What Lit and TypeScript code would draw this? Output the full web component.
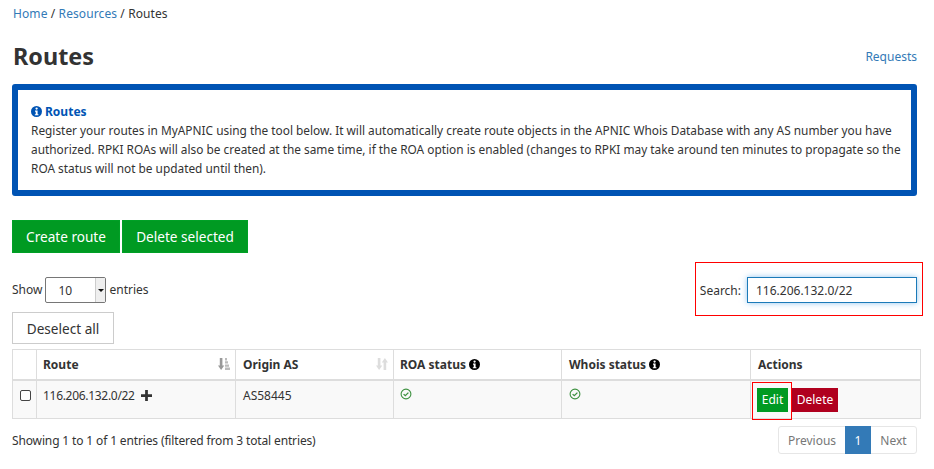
import { LitElement, html, css, svg } from "lit";
import { customElement } from "lit/decorators.js";

const info = (cls: string) => html`<svg class=${cls} viewBox="0 0 24 24" aria-hidden="true"><circle cx="12" cy="12" r="12" fill="currentColor"/><circle cx="12.2" cy="5.6" r="2.5" fill="#fff"/><path d="M8.8 10h5.6v8h1.8v2.4H8.4V18h1.9v-5.6H8.8z" fill="#fff"/></svg>`;
const check = html`<svg class="ok" viewBox="0 0 12 12" aria-hidden="true"><circle cx="6" cy="6" r="4.9" fill="none" stroke="#3d9140" stroke-width="1.1"/><path d="M3.6 6.1l1.7 1.6 3.1-3.1" fill="none" stroke="#3d9140" stroke-width="1.3"/></svg>`;
const sort = (active: boolean) => html`<svg class="sort" viewBox="0 0 12 12" aria-hidden="true">${active
  ? svg`<path d="M1.8 0h2.6v7.6h1.9L3.1 12 0 7.6h1.8z" fill="#999"/><path d="M7 0h2v2.4H7zM7 3.2h3v2.4H7zM7 6.4h4v2.4H7zM7 9.6h5V12H7z" fill="#bbb"/>`
  : svg`<path d="M1.8 0h2.6v7.6h1.9L3.1 12 0 7.6h1.8zM7.6 12h2.6V4.4H12L8.9 0 5.8 4.4h1.8z" fill="#ddd"/>`}</svg>`;

@customElement("app-root")
export class AppRoot extends LitElement {
  static styles = css`
    :host { display: block; position: relative; width: 934px; height: 469px; overflow: hidden; background: #fff; color: #333;
      font-family: "Noto Sans", "Open Sans", sans-serif; font-size: 12px; line-height: 19px; }
    a { color: #337ab7; text-decoration: none; }
    .page { display: flex; flex-direction: column; padding: 4px 13px 0 12px; }
    .crumbs { height: 20px; line-height: 20px; letter-spacing: .1px; padding-left: 1px; }
    .head { display: flex; justify-content: space-between; align-items: center; width: 905px; height: 40px; margin-top: 12px; }
    h1 { margin: 0; font-size: 23.4px; font-weight: 700; line-height: 40px; color: #333; padding-left: 1px; }
    .alert { margin-top: 8px; width: 905px; height: 112px; box-sizing: border-box; border: 6px solid #0054b4; border-radius: 3px; padding: 12px 8px 12px 13px; color: #333; font-size: 11.86px; }
    .alert-title { display: flex; align-items: center; gap: 3px; color: #0054b4; font-weight: 700; font-size: 12px; }
    .alert p { margin: 0; }
    .i-blue { width: 11px; height: 11px; }
    .actions { display: flex; gap: 2px; margin-top: 24px; }
    .btn { display: flex; align-items: center; justify-content: center; height: 33px; box-sizing: border-box; background: #009a22; color: #fff; font-size: 13.6px; border: 1px solid #00a026; }
    .create { width: 108px; }
    .del-sel { width: 126px; }
    .controls { display: flex; justify-content: space-between; align-items: center; margin-top: 24px; height: 26px; width: 905px; }
    .show { display: flex; align-items: center; gap: 3px; }
    .show-label { margin-top: -2px; }
    .select { display: flex; width: 61px; height: 26px; box-sizing: border-box; border: 1px solid #767676; border-radius: 2px; }
    .select .val { flex: 1; padding: 3px 0 0 12px; }
    .select .arrow { width: 9px; background: #efefef; border-left: 1px solid #ccc; display: flex; align-items: center; justify-content: center; }
    .select .arrow i { width: 0; height: 0; border: 3px solid transparent; border-top: 3px solid #111; border-bottom: 0; }
    .search { display: flex; align-items: center; gap: 6px; }
    .input { width: 170px; height: 26px; box-sizing: border-box; border: 1px solid #1b7ab8; box-shadow: 0 0 6px rgba(102,175,233,.7); padding: 3px 0 0 8px; color: #333; }
    .deselect { display: flex; align-items: center; justify-content: center; margin-top: 9px; width: 102px; height: 32px; box-sizing: border-box; border: 1px solid #ccc; font-size: 13.6px; }
    table { margin-top: 5px; width: 908px; border-collapse: collapse; table-layout: fixed; }
    th, td { border: 1px solid #ddd; padding: 0 0 0 7px; text-align: left; vertical-align: top; }
    th { height: 30px; vertical-align: middle; border-bottom: 2px solid #ddd; font-weight: 700; color: #333; box-sizing: border-box; }
    td { height: 39px; padding-top: 5px; box-sizing: border-box; background: #f9f9f9; }
    .tight { padding-left: 6px; }
    .thwrap { display: flex; align-items: center; gap: 3px; }
    .thwrap .sort { margin-left: auto; margin-right: 5px; }
    .sort { width: 12px; height: 12px; }
    .i-dark { width: 11px; height: 11px; color: #000; }
    .ok { width: 12px; height: 12px; display: block; margin-top: 2px; }
    .cb { width: 9px; height: 9px; border: 1px solid #444; border-radius: 2px; margin: 4px 0 0; background: #fff; }
    .route { letter-spacing: -.3px; }
    .plus { width: 11px; height: 11px; margin-left: 3px; vertical-align: -1px; }
    .row-btns { display: flex; gap: 4px; margin: 2px 0 0 -1px; }
    .small { display: flex; align-items: center; justify-content: center; height: 24px; color: #fff; }
    .edit { width: 31px; background: #009a22; }
    .delete { width: 46px; background: #b0001e; }
    .foot { display: flex; justify-content: space-between; align-items: center; width: 905px; margin-top: 7px; height: 28px; }
    .count { letter-spacing: -.14px; }
    .pager { display: flex; height: 28px; box-sizing: border-box; border: 1px solid #e6e6e6; border-radius: 3px; color: #777; }
    .pager span { display: flex; align-items: center; justify-content: center; }
    .prev { width: 66px; }
    .cur { width: 26px; background: #337ab7; color: #fff; margin: -1px 0; }
    .next { width: 45px; }
    .mark { position: absolute; border: 1px solid #f00; box-sizing: border-box; pointer-events: none; }
    .mark-search { left: 695px; top: 262px; width: 228px; height: 54px; }
    .mark-edit { left: 752px; top: 382px; width: 40px; height: 38px; }
  `;

  render() {
    return html`
      <div class="page">
        <div class="crumbs"><a href="#">Home</a> / <a href="#">Resources</a> / Routes</div>
        <div class="head"><h1>Routes</h1><a href="#">Requests</a></div>
        <div class="alert">
          <div class="alert-title">${info("i-blue")}<span>Routes</span></div>
          <p>Register your routes in MyAPNIC using the tool below. It will automatically create route objects in the APNIC Whois Database with any AS number you have authorized. RPKI ROAs will also be created at the same time, if the ROA option is enabled (changes to RPKI may take around ten minutes to propagate so the ROA status will not be updated until then).</p>
        </div>
        <div class="actions"><div class="btn create">Create route</div><div class="btn del-sel">Delete selected</div></div>
        <div class="controls">
          <div class="show"><span class="show-label">Show</span> <div class="select"><div class="val">10</div><div class="arrow"><i></i></div></div> <span class="show-label">entries</span></div>
          <div class="search"><span>Search:</span> <div class="input">116.206.132.0/22</div></div>
        </div>
        <div class="deselect">Deselect all</div>
        <table>
          <colgroup><col style="width:24px"><col style="width:199px"><col style="width:158px"><col style="width:168px"><col style="width:189px"><col style="width:170px"></colgroup>
          <thead><tr>
            <th></th>
            <th class="tight"><div class="thwrap">Route ${sort(true)}</div></th>
            <th><div class="thwrap">Origin AS ${sort(false)}</div></th>
            <th class="tight"><div class="thwrap">ROA status ${info("i-dark")}</div></th>
            <th><div class="thwrap">Whois status ${info("i-dark")}</div></th>
            <th>Actions</th>
          </tr></thead>
          <tbody><tr>
            <td><div class="cb"></div></td>
            <td class="tight"><span class="route">116.206.132.0/22</span> <svg class="plus" viewBox="0 0 12 12" aria-hidden="true"><path d="M4.5 0h3v4.5H12v3H7.5V12h-3V7.5H0v-3h4.5z" fill="#333"/></svg></td>
            <td>AS58445</td>
            <td class="tight">${check}</td>
            <td>${check}</td>
            <td><div class="row-btns"><div class="small edit">Edit</div><div class="small delete">Delete</div></div></td>
          </tr></tbody>
        </table>
        <div class="foot">
          <div class="count">Showing 1 to 1 of 1 entries (filtered from 3 total entries)</div>
          <div class="pager"><span class="prev">Previous</span><span class="cur">1</span><span class="next">Next</span></div>
        </div>
      </div>
      <div class="mark mark-search"></div>
      <div class="mark mark-edit"></div>
    `;
  }
}
